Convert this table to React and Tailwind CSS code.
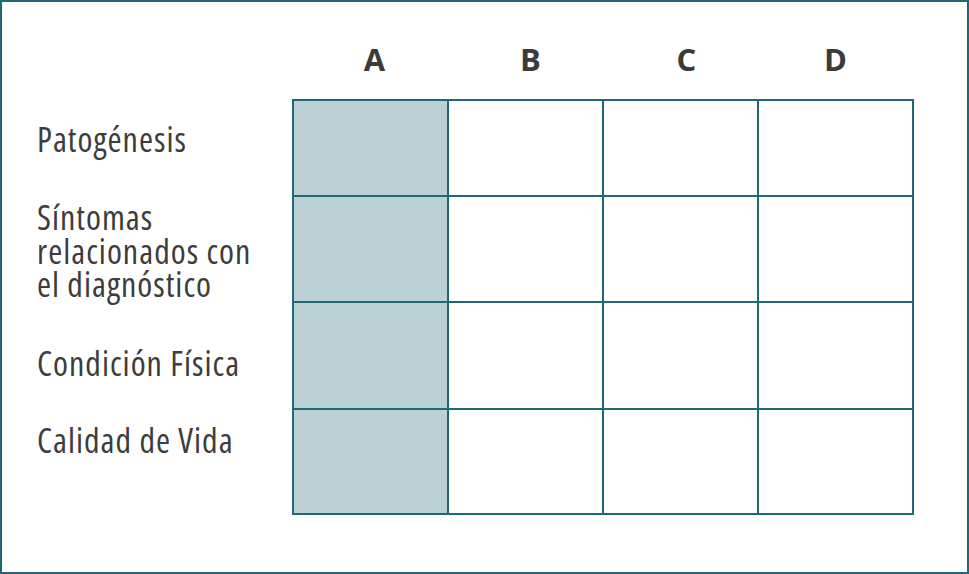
import React from 'react';

// header letters with a small nudge to sit like the original
const cols = [
  { c: 'A', nudge: 'pl-[10px]' },
  { c: 'B', nudge: 'pl-[12px]' },
  { c: 'C', nudge: 'pl-[14px]' },
  { c: 'D', nudge: 'pl-[2px]' },
];

// label, row height (incl. bottom line), top padding of the label
const rows = [
  { label: ['Patogénesis'], h: 'h-[96px]', pt: 'pt-[22px]' },
  { label: ['Síntomas', 'relacionados con', 'el diagnóstico'], h: 'h-[106px]', pt: 'pt-[4px]' },
  { label: ['Condición Física'], h: 'h-[107px]', pt: 'pt-[44px]' },
  { label: ['Calidad de Vida'], h: 'h-[105px]', pt: 'pt-[14px]' },
];

const font = { fontFamily: '"Open Sans", "DejaVu Sans Condensed", sans-serif' };

export default function App() {
  return (
    <div className="w-[969px] h-[574px] bg-white border-2 border-[#1f6874] box-border" style={font}>
      {/* column headers */}
      <div className="flex h-[97px] pl-[290px] pt-[41px]">
        {cols.map(({ c, nudge }) => (
          <div key={c} className={`w-[155px] ${nudge} text-center text-[31px] leading-[33px] font-bold text-[#3b3b3b]`}>
            {c}
          </div>
        ))}
      </div>

      <div className="flex">
        {/* row labels */}
        <div className="w-[290px] pt-[2px] font-stretch-condensed">
          {rows.map((r, i) => (
            <div key={i} className={`${r.h} ${r.pt} pl-[35px] text-[34px] leading-[33.5px] tracking-[1px] text-[#3d3d3d] whitespace-nowrap`}>
              {r.label.map((l) => (
                <div key={l}>{l}</div>
              ))}
            </div>
          ))}
        </div>

        {/* grid */}
        <div className="border-l-2 border-t-2 border-[#1f6874]">
          {rows.map((r, i) => (
            <div key={i} className={`flex ${r.h}`}>
              {cols.map(({ c }, j) => (
                <div
                  key={c}
                  className={`w-[155px] h-full border-r-2 border-b-2 border-[#1f6874] ${j === 0 ? 'bg-[#bcd1d6]' : 'bg-white'}`}
                />
              ))}
            </div>
          ))}
        </div>
      </div>
    </div>
  );
}
